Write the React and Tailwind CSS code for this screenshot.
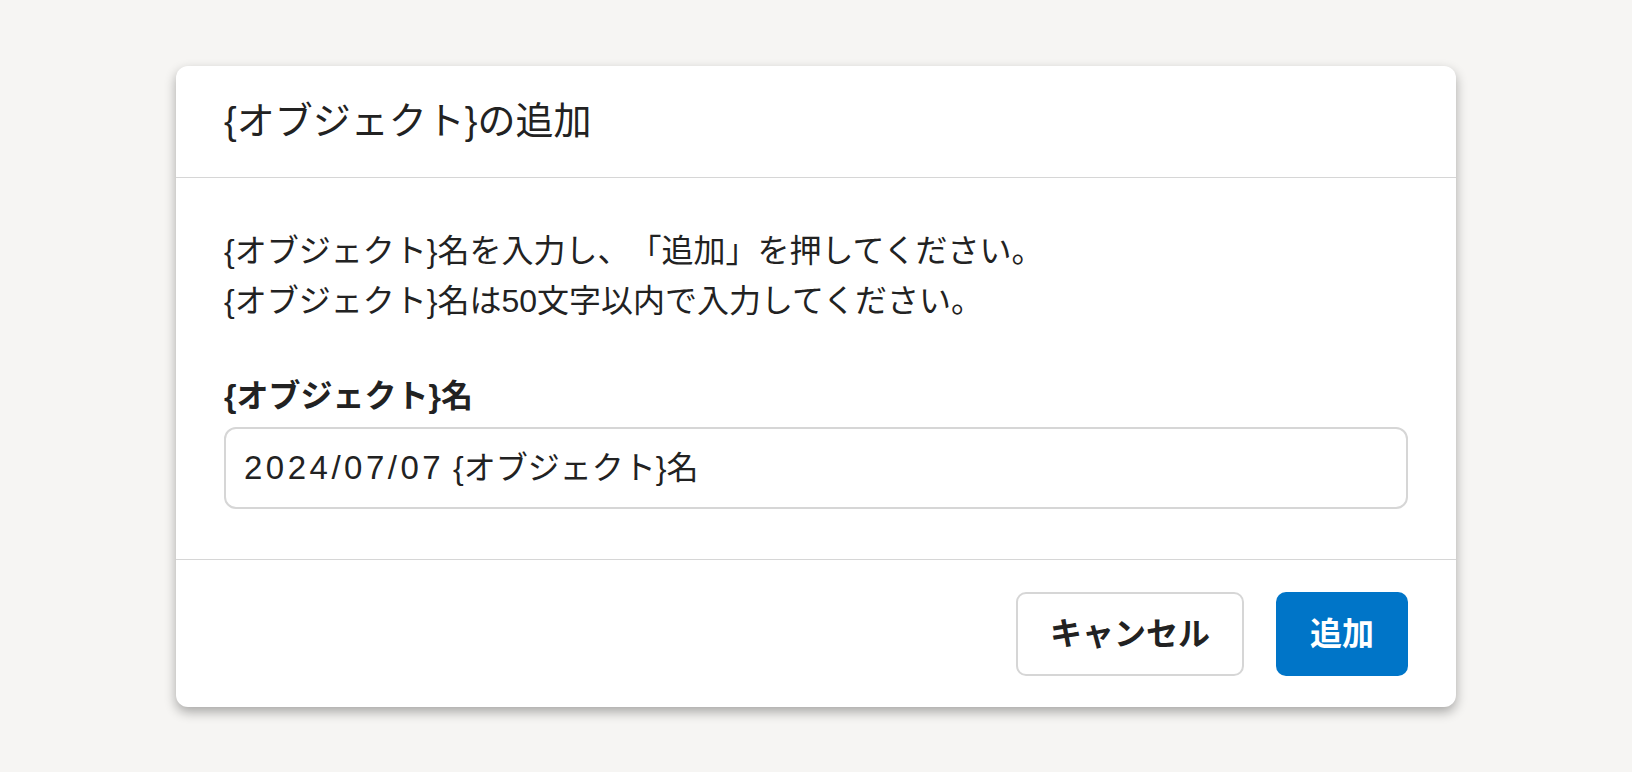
export default function App() {
  const font = { fontFamily: '"Liberation Sans", "Noto Sans CJK JP", sans-serif' };
  return (
    <div
      className="min-h-screen w-full bg-[#f6f5f3] flex items-center justify-center text-[#222222] [text-spacing-trim:space-all]"
      style={font}
    >
      <div className="w-[1280px] bg-white rounded-xl shadow-[0_5px_12px_rgba(0,0,0,0.32)] flex flex-col">
        <div className="h-[112px] px-12 flex items-center border-b border-[#d6d6d6]">
          <h1 className="text-[38px] leading-[48px] font-normal">{"{オブジェクト}の追加"}</h1>
        </div>
        <div className="px-12 pt-12 pb-[50px] border-b border-[#d6d6d6]">
          <p className="text-[32px] leading-[50px]">
            {"{オブジェクト}名を入力し、「追加」を押してください。"}
            <br />
            {"{オブジェクト}名は50文字以内で入力してください。"}
          </p>
          <label className="block mt-12 mb-2 text-[32px] leading-[45px] font-bold">
            {"{オブジェクト}名"}
          </label>
          <div
            role="textbox"
            className="flex items-center w-full h-[82px] px-[18px] rounded-[12px] border-2 border-[#d6d6d6] bg-white text-[32px] text-[#222222] whitespace-pre"
          >
            <span className="text-[33px] tracking-[3.5px]">2024/07/07</span>
            <span>{" {オブジェクト}名"}</span>
          </div>
        </div>
        <div className="px-12 pt-8 pb-[31px] flex justify-end gap-8">
          <button className="h-[84px] px-[32px] rounded-[10px] border-2 border-[#d6d6d6] bg-white text-[32px] font-bold text-[#222222]">
            キャンセル
          </button>
          <button className="h-[84px] px-[34px] rounded-[10px] bg-[#0075c8] text-[32px] font-bold text-white">
            追加
          </button>
        </div>
      </div>
    </div>
  );
}
